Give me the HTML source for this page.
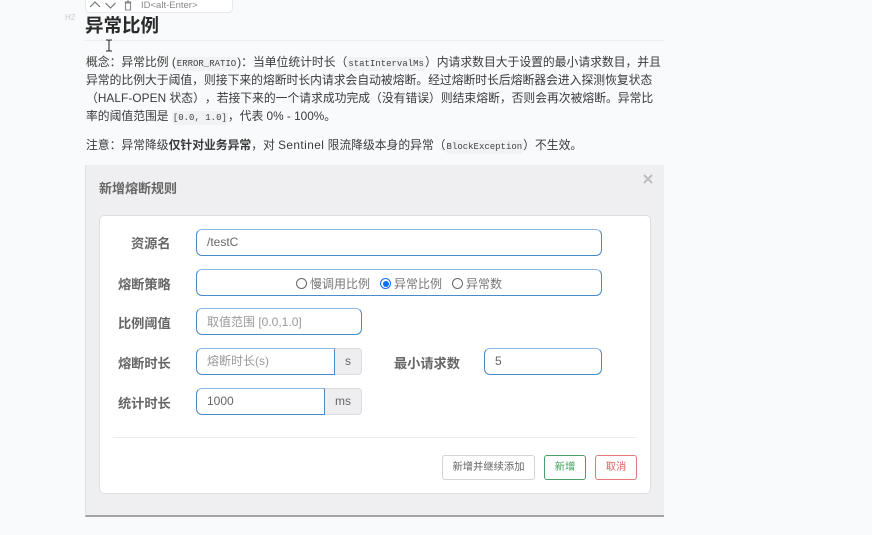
<!DOCTYPE html>
<html lang="zh"><head><meta charset="utf-8">
<style>
html,body{margin:0;padding:0;width:872px;height:535px;overflow:hidden;background:#f9fafc}
body{position:relative;font-family:"Liberation Sans","Noto Sans CJK SC",sans-serif;color:#333;text-spacing-trim:space-all}
.a{position:absolute;white-space:nowrap}
.l{position:absolute;left:86px;white-space:nowrap;font-size:11.8px;line-height:18px;height:18px;color:#3a3a3a}
code{font-family:"Liberation Mono","Noto Sans CJK SC",monospace;font-size:9px;background:#f1f2f4;border-radius:3px;padding:2px 1px;color:#444}
.lab{position:absolute;font-size:13.2px;font-weight:700;color:#666;line-height:18px;white-space:nowrap}
.in{position:absolute;box-sizing:border-box;height:27px;background:#fff;border:1px solid #4a8ac8;border-top-color:#8db9e2;border-radius:6px;font-size:12px;line-height:25px;padding-left:10px;color:#666;white-space:nowrap}
.add{position:absolute;box-sizing:border-box;height:27px;background:#eeeef0;border:1px solid #dcdcde;border-left:0;border-radius:0 4px 4px 0;font-size:12px;line-height:25px;text-align:center;color:#666}
.btn{position:absolute;top:455px;box-sizing:border-box;height:25px;background:#fff;border-radius:3px;font-size:10.3px;line-height:23px;text-align:center;white-space:nowrap}
.r{position:absolute;top:278px;width:9px;height:9px;border:1px solid #666;border-radius:50%;background:#fff}
.t{position:absolute;top:276px;font-size:12px;line-height:17px;color:#777;white-space:nowrap}
</style></head><body>

<div class="a" style="left:85px;top:-6px;width:148px;height:19px;box-sizing:border-box;background:#fff;border:1px solid #e8e9ec;border-radius:4px"></div>
<svg class="a" style="left:88px;top:0" width="50" height="11" viewBox="0 0 50 11">
<path d="M2 7 L7 2 L12 7" fill="none" stroke="#777" stroke-width="1.2"/>
<path d="M17.5 3 L22.5 8 L27.5 3" fill="none" stroke="#777" stroke-width="1.2"/>
<path d="M37.5 3 H42.5 V10 H37.5 Z M36.5 2 H43.5 M39 1 H41" fill="none" stroke="#888" stroke-width="1.1"/>
</svg>
<div class="a" style="left:141px;top:-1px;font-size:9.5px;line-height:13px;color:#888">ID&lt;alt-Enter&gt;</div>

<div class="a" style="left:65px;top:13px;font-size:8px;line-height:10px;color:#ccc">H2</div>
<div class="a" style="left:85px;top:13px;font-size:18.5px;line-height:25px;font-weight:700;color:#2a2a2a">异常比例</div>
<div class="a" style="left:85px;top:40px;width:579px;height:1px;background:#eceef0"></div>
<svg class="a" style="left:105px;top:39px" width="8" height="13" viewBox="0 0 8 13"><path d="M1 1 H3 Q4 1 4 2 V11 Q4 12 3 12 H1 M7 1 H5 Q4 1 4 2 M4 11 Q4 12 5 12 H7" fill="none" stroke="#222" stroke-width="1"/></svg>

<div class="l" style="top:53px">概念：异常比例 (<code>ERROR_RATIO</code>)：当单位统计时长（<code>statIntervalMs</code>）内请求数目大于设置的最小请求数目，并且</div>
<div class="l" style="top:71px">异常的比例大于阈值，则接下来的熔断时长内请求会自动被熔断。经过熔断时长后熔断器会进入探测恢复状态</div>
<div class="l" style="top:89px">（<span style="letter-spacing:.1px">HALF-OPEN</span> 状态），若接下来的一个请求成功完成（没有错误）则结束熔断，否则会再次被熔断。异常比</div>
<div class="l" style="top:107px">率的阈值范围是 <code>[0.0, 1.0]</code>，代表 0% - 100%。</div>
<div class="l" style="top:136px">注意：异常降级<b>仅针对业务异常</b>，对 <span style="letter-spacing:.45px">Sentinel</span> 限流降级本身的异常（<code>BlockException</code>）不生效。</div>

<div class="a" style="left:85px;top:165px;width:579px;height:352px;box-sizing:border-box;background:#efeef0;border-left:1px solid #e2e2e4;border-bottom:2px solid #a3a3a3"></div>
<div class="a" style="left:99px;top:180px;font-size:13px;line-height:18px;font-weight:700;color:#666">新增熔断规则</div>
<svg class="a" style="left:643px;top:174px" width="10" height="10" viewBox="0 0 10 10"><path d="M1 1 L9 9 M9 1 L1 9" stroke="#bdbdbf" stroke-width="2"/></svg>

<div class="a" style="left:99px;top:215px;width:552px;height:279px;box-sizing:border-box;background:#fff;border:1px solid #dedede;border-radius:5px"></div>

<div class="lab" style="left:131px;top:235px">资源名</div>
<div class="in" style="left:196px;top:229px;width:406px">/testC</div>

<div class="lab" style="left:118px;top:276px">熔断策略</div>
<div class="in" style="left:196px;top:269px;width:406px"></div>
<div class="r" style="left:296px"></div>
<div class="t" style="left:310px">慢调用比例</div>
<div class="r" style="left:380px;border-color:#0d6efd"></div>
<div class="a" style="left:382.5px;top:280.5px;width:6px;height:6px;border-radius:50%;background:#0d6efd"></div>
<div class="t" style="left:394px">异常比例</div>
<div class="r" style="left:452px"></div>
<div class="t" style="left:466px">异常数</div>

<div class="lab" style="left:118px;top:315px">比例阈值</div>
<div class="in" style="left:196px;top:308px;width:166px;color:#999;line-height:27px">取值范围 [0.0,1.0]</div>

<div class="lab" style="left:118px;top:355px">熔断时长</div>
<div class="in" style="left:196px;top:348px;width:139px;color:#999;border-radius:6px 0 0 6px">熔断时长(s)</div>
<div class="add" style="left:335px;top:348px;width:27px">s</div>
<div class="lab" style="left:394px;top:355px">最小请求数</div>
<div class="in" style="left:484px;top:348px;width:118px">5</div>

<div class="lab" style="left:118px;top:395px">统计时长</div>
<div class="in" style="left:196px;top:388px;width:129px;border-radius:6px 0 0 6px">1000</div>
<div class="add" style="left:325px;top:388px;width:37px">ms</div>

<div class="a" style="left:113px;top:437px;width:524px;height:1px;background:#ececec"></div>
<div class="btn" style="left:442px;width:93px;border:1px solid #d4d4d4;color:#666">新增并继续添加</div>
<div class="btn" style="left:544px;width:42px;border:1px solid #48a068;color:#46a060">新增</div>
<div class="btn" style="left:595px;width:42px;border:1px solid #e07a7a;color:#e06060">取消</div>
</body></html>
